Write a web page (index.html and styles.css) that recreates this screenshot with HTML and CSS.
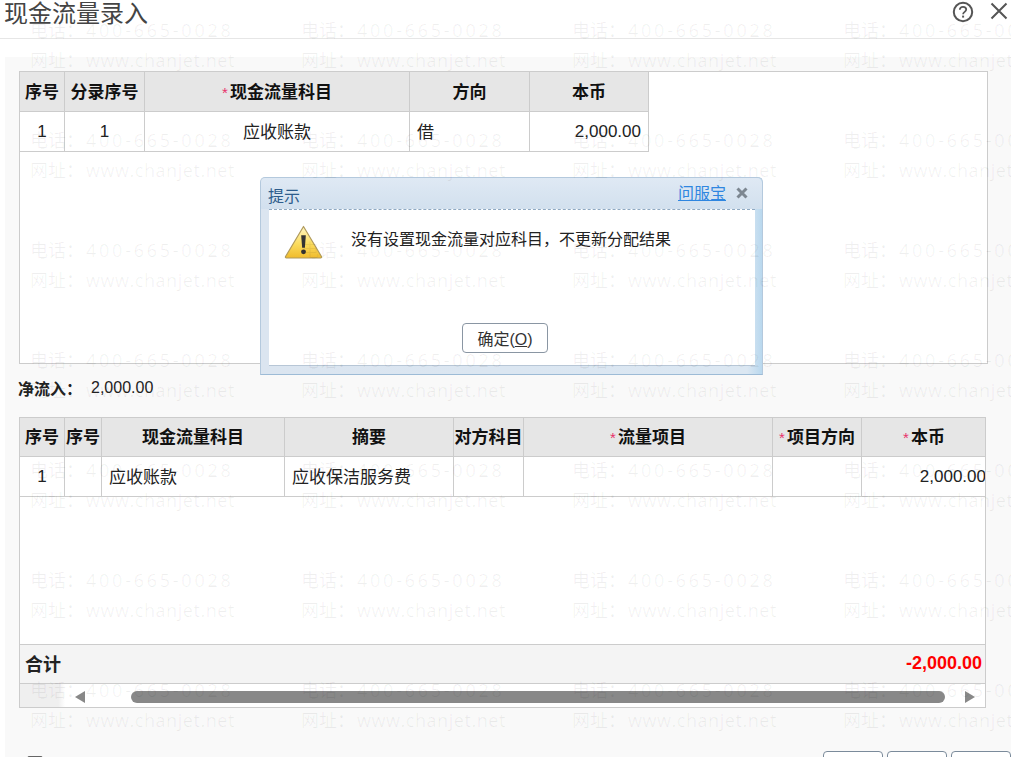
FILE: index.html
```html
<!DOCTYPE html>
<html lang="zh-CN">
<head>
    <meta charset="UTF-8">
    <title>现金流量录入</title>
    <link rel="stylesheet" href="styles.css">
</head>
<body>
    <div class="page">
        <header class="top-bar">
            <h1 class="top-title">现金流量录入</h1>
            <div class="top-icons">
                <svg class="icon-help" width="22" height="22" viewBox="0 0 22 22" fill="none" stroke="#555" stroke-width="2">
                    <circle cx="11" cy="11" r="9.2"/>
                    <path d="M7.8 8.8c0-1.9 1.4-3 3.2-3s3.2 1.1 3.2 2.8c0 2.2-3.1 2.3-3.1 4.6" stroke-width="1.8"/>
                    <path d="M11.1 14.6v2" stroke-width="2"/>
                </svg>
                <svg class="icon-close" width="20" height="20" viewBox="0 0 20 20" fill="none" stroke="#555" stroke-width="2">
                    <path d="M2.5 2.5l15 15M17.5 2.5l-15 15"/>
                </svg>
            </div>
        </header>

        <main class="content">
            <!-- 上表 -->
            <section class="panel panel-top">
                <table class="grid grid-top">
                    <tr>
                        <th class="c45">序号</th>
                        <th class="c80">分录序号</th>
                        <th class="c265"><i class="star">*</i>现金流量科目</th>
                        <th class="c120">方向</th>
                        <th class="c119">本币</th>
                    </tr>
                    <tr>
                        <td class="center digit">1</td>
                        <td class="center digit">1</td>
                        <td class="center">应收账款</td>
                        <td>借</td>
                        <td class="num digit">2,000.00</td>
                    </tr>
                </table>
            </section>

            <div class="net-row"><b>净流入：</b><span class="net-value">2,000.00</span></div>

            <!-- 下表 -->
            <section class="panel panel-bottom">
                <div class="grid-wrap">
                    <table class="grid grid-bottom">
                        <tr>
                            <th class="c45">序号</th>
                            <th class="c37">序号</th>
                            <th class="c183">现金流量科目</th>
                            <th class="c169">摘要</th>
                            <th class="c70">对方科目</th>
                            <th class="c249"><i class="star">*</i>流量项目</th>
                            <th class="c89"><i class="star">*</i>项目方向</th>
                            <th class="c124"><i class="star">*</i>本币</th>
                        </tr>
                        <tr>
                            <td class="center digit">1</td>
                            <td></td>
                            <td>应收账款</td>
                            <td>应收保洁服务费</td>
                            <td></td>
                            <td></td>
                            <td></td>
                            <td class="num num-tight digit">2,000.00</td>
                        </tr>
                    </table>
                </div>
                <div class="total-row">
                    <b>合计</b>
                    <b class="total-value">-2,000.00</b>
                </div>
                <div class="scroll-bar">
                    <div class="scroll-frozen"></div>
                    <span class="arrow arrow-left"></span>
                    <div class="scroll-thumb"></div>
                    <span class="arrow arrow-right"></span>
                </div>
            </section>

            <div class="bottom-bar">
                <span class="check"></span>
                <div class="bottom-btns">
                    <button class="btn-small"></button>
                    <button class="btn-small"></button>
                    <button class="btn-small"></button>
                </div>
            </div>
        </main>

        <!-- 提示框 -->
        <div class="dialog">
            <div class="dialog-head">
                <span class="dialog-title">提示</span>
                <a class="dialog-link" href="#">问服宝</a>
                <svg class="dialog-close" width="12" height="12" viewBox="0 0 12 12" fill="none" stroke="#7d8791" stroke-width="3">
                    <path d="M1.5 1.5l9 9M10.5 1.5l-9 9"/>
                </svg>
            </div>
            <div class="dialog-body">
                <div class="dialog-msg">
                    <svg class="icon-warn" width="39" height="34" viewBox="0 0 40 35">
                        <defs>
                            <linearGradient id="warnFill" x1="0" y1="0" x2="0" y2="1">
                                <stop offset="0" stop-color="#fff6c4"/>
                                <stop offset="0.55" stop-color="#fbdc5e"/>
                                <stop offset="1" stop-color="#f0bb2c"/>
                            </linearGradient>
                        </defs>
                        <path d="M20 1.5L38.5 32.5a1 1 0 0 1-.9 1.5H2.4a1 1 0 0 1-.9-1.5z" fill="url(#warnFill)" stroke="#b09a5c" stroke-width="1.2" stroke-linejoin="round"/>
                        <path d="M17.6 10.5h4.8l-1 13h-2.8z" fill="#333"/>
                        <circle cx="20" cy="27.6" r="2.5" fill="#333"/>
                    </svg>
                    <span class="dialog-text">没有设置现金流量对应科目，不更新分配结果</span>
                </div>
                <button class="btn-ok">确定(<u>O</u>)</button>
            </div>
        </div>

        <!-- 水印 -->
        <div class="watermark">
            <div class="wm"><p>电话：<span class="wm-tel">400-665-0028</span></p><p>网址：<span class="wm-url">www.chanjet.net</span></p></div>
            <div class="wm"><p>电话：<span class="wm-tel">400-665-0028</span></p><p>网址：<span class="wm-url">www.chanjet.net</span></p></div>
            <div class="wm"><p>电话：<span class="wm-tel">400-665-0028</span></p><p>网址：<span class="wm-url">www.chanjet.net</span></p></div>
            <div class="wm"><p>电话：<span class="wm-tel">400-665-0028</span></p><p>网址：<span class="wm-url">www.chanjet.net</span></p></div>
            <div class="wm"><p>电话：<span class="wm-tel">400-665-0028</span></p><p>网址：<span class="wm-url">www.chanjet.net</span></p></div>
            <div class="wm"><p>电话：<span class="wm-tel">400-665-0028</span></p><p>网址：<span class="wm-url">www.chanjet.net</span></p></div>
            <div class="wm"><p>电话：<span class="wm-tel">400-665-0028</span></p><p>网址：<span class="wm-url">www.chanjet.net</span></p></div>
            <div class="wm"><p>电话：<span class="wm-tel">400-665-0028</span></p><p>网址：<span class="wm-url">www.chanjet.net</span></p></div>
            <div class="wm"><p>电话：<span class="wm-tel">400-665-0028</span></p><p>网址：<span class="wm-url">www.chanjet.net</span></p></div>
            <div class="wm"><p>电话：<span class="wm-tel">400-665-0028</span></p><p>网址：<span class="wm-url">www.chanjet.net</span></p></div>
            <div class="wm"><p>电话：<span class="wm-tel">400-665-0028</span></p><p>网址：<span class="wm-url">www.chanjet.net</span></p></div>
            <div class="wm"><p>电话：<span class="wm-tel">400-665-0028</span></p><p>网址：<span class="wm-url">www.chanjet.net</span></p></div>
            <div class="wm"><p>电话：<span class="wm-tel">400-665-0028</span></p><p>网址：<span class="wm-url">www.chanjet.net</span></p></div>
            <div class="wm"><p>电话：<span class="wm-tel">400-665-0028</span></p><p>网址：<span class="wm-url">www.chanjet.net</span></p></div>
            <div class="wm"><p>电话：<span class="wm-tel">400-665-0028</span></p><p>网址：<span class="wm-url">www.chanjet.net</span></p></div>
            <div class="wm"><p>电话：<span class="wm-tel">400-665-0028</span></p><p>网址：<span class="wm-url">www.chanjet.net</span></p></div>
            <div class="wm"><p>电话：<span class="wm-tel">400-665-0028</span></p><p>网址：<span class="wm-url">www.chanjet.net</span></p></div>
            <div class="wm"><p>电话：<span class="wm-tel">400-665-0028</span></p><p>网址：<span class="wm-url">www.chanjet.net</span></p></div>
            <div class="wm"><p>电话：<span class="wm-tel">400-665-0028</span></p><p>网址：<span class="wm-url">www.chanjet.net</span></p></div>
            <div class="wm"><p>电话：<span class="wm-tel">400-665-0028</span></p><p>网址：<span class="wm-url">www.chanjet.net</span></p></div>
            <div class="wm"><p>电话：<span class="wm-tel">400-665-0028</span></p><p>网址：<span class="wm-url">www.chanjet.net</span></p></div>
            <div class="wm"><p>电话：<span class="wm-tel">400-665-0028</span></p><p>网址：<span class="wm-url">www.chanjet.net</span></p></div>
            <div class="wm"><p>电话：<span class="wm-tel">400-665-0028</span></p><p>网址：<span class="wm-url">www.chanjet.net</span></p></div>
            <div class="wm"><p>电话：<span class="wm-tel">400-665-0028</span></p><p>网址：<span class="wm-url">www.chanjet.net</span></p></div>
            <div class="wm"><p>电话：<span class="wm-tel">400-665-0028</span></p><p>网址：<span class="wm-url">www.chanjet.net</span></p></div>
            <div class="wm"><p>电话：<span class="wm-tel">400-665-0028</span></p><p>网址：<span class="wm-url">www.chanjet.net</span></p></div>
            <div class="wm"><p>电话：<span class="wm-tel">400-665-0028</span></p><p>网址：<span class="wm-url">www.chanjet.net</span></p></div>
            <div class="wm"><p>电话：<span class="wm-tel">400-665-0028</span></p><p>网址：<span class="wm-url">www.chanjet.net</span></p></div>
        </div>
    </div>
</body>
</html>
```

FILE: styles.css
```css
html, body {
    margin: 0;
    height: 100%;
    overflow: hidden;
}

body {
    font-family: "Liberation Sans", "Noto Sans CJK SC", sans-serif;
    font-size: 16px;
    color: #222;
    background-color: #fff;
}

.page {
    position: relative;
    width: 1011px;
    height: 757px;
    overflow: hidden;
}

/* 顶部标题 */
.top-bar {
    display: flex;
    justify-content: space-between;
    height: 38px;
    padding: 0 2px 0 4px;
    border-bottom: 1px solid #e6e6e6;
}

.top-title {
    margin: 0;
    font-size: 24px;
    font-weight: normal;
    line-height: 27px;
    color: #444;
}

.top-icons {
    display: flex;
    align-items: flex-start;
    gap: 15px;
    padding-top: 1px;
}

/* 主体 */
.content {
    margin: 18px 0 0 5px;
    padding: 14px 0 0 14px;
    height: 700px;
    background-color: #f9f9f9;
}

.panel {
    background-color: #fff;
    border: 1px solid #ccc;
}

.panel-top {
    width: 967px;
    height: 291px;
}

.panel-bottom {
    width: 965px;
    height: 289px;
    display: flex;
    flex-direction: column;
}

.grid {
    border-collapse: separate;
    border-spacing: 0;
    table-layout: fixed;
    font-size: 17px;
}

.grid-top { width: 629px; }
.grid-bottom { width: 966px; }

.grid th,
.grid td {
    height: 37px;
    padding: 0 0 2px;
    border-right: 1px solid #ccc;
    border-bottom: 1px solid #ccc;
    white-space: nowrap;
    overflow: hidden;
}

.grid th {
    background-color: #e6e6e6;
    color: #111;
    font-weight: bold;
    text-align: center;
}

.grid td {
    padding: 0 7px 2px;
    text-align: left;
}

.grid-bottom th {
    height: 35px;
    padding-bottom: 3px;
}

.grid-bottom th:last-child,
.grid-bottom td:last-child {
    border-right: none;
}

.grid td.center { text-align: center; }
.grid td.num { text-align: right; padding-right: 7px; }
.grid td.num-tight { padding-right: 0; }
.grid td.digit { padding-bottom: 0; }

.star {
    margin-right: 2px;
    color: #e8316a;
    font-size: 15px;
    font-style: normal;
    font-weight: normal;
}

/* 列宽 */
.c37 { width: 36px; }
.c45 { width: 44px; }
.c70 { width: 69px; }
.c80 { width: 79px; }
.c89 { width: 88px; }
.c119 { width: 118px; }
.c120 { width: 119px; }
.c124 { width: 124px; }
.c169 { width: 168px; }
.c183 { width: 182px; }
.c249 { width: 248px; }
.c265 { width: 264px; }

.net-row {
    display: flex;
    align-items: center;
    height: 48px;
    margin: 0 0 5px -1px;
}

.net-value {
    margin-left: 9px;
}

.grid-wrap {
    flex: 1;
    overflow: hidden;
}

.total-row {
    display: flex;
    justify-content: space-between;
    align-items: center;
    height: 36px;
    padding: 0 3px 2px 5px;
    background-color: #f4f4f4;
    border-top: 1px solid #ccc;
    border-bottom: 1px solid #ccc;
    font-size: 18px;
}

.total-value { color: #f00; }

.scroll-bar {
    display: flex;
    align-items: center;
    height: 23px;
}

.scroll-frozen {
    align-self: stretch;
    width: 45px;
    background: linear-gradient(to right, #efefef 85%, #fff);
}

.arrow {
    width: 0;
    height: 0;
    margin-top: 2px;
    border-top: 6px solid transparent;
    border-bottom: 6px solid transparent;
}

.arrow-left {
    margin-left: 10px;
    margin-right: 46px;
    border-right: 10px solid #888;
}

.arrow-right {
    margin-left: 20px;
    border-left: 10px solid #888;
}

.scroll-thumb {
    width: 814px;
    height: 12px;
    margin-top: 2px;
    border-radius: 6px;
    background-color: #888;
}

.bottom-bar {
    display: flex;
    justify-content: space-between;
    margin-top: 43px;
    padding-left: 8px;
}

.check {
    width: 14px;
    height: 14px;
    margin-top: 5px;
    border: 1px solid #666;
    border-radius: 2px;
}

.bottom-btns {
    display: flex;
    gap: 4px;
}

.btn-small {
    width: 60px;
    height: 30px;
    padding: 0;
    background-color: #fff;
    border: 1px solid #7b8b9b;
    border-radius: 4px;
}

/* 提示框 */
.dialog {
    position: absolute;
    top: 177px;
    left: 260px;
    width: 503px;
    height: 198px;
    display: flex;
    flex-direction: column;
    box-sizing: border-box;
    padding: 0 7px 8px 8px;
    background: linear-gradient(to right, #dbe5f0, #dbe7f2 97%, #b9d8ee);
    border: 1px solid #b4c9dd;
    border-bottom-color: #9dbbd6;
    border-radius: 5px 5px 0 0;
}

.dialog-head {
    display: flex;
    align-items: center;
    height: 31px;
    margin: 0 -7px 0 -8px;
    padding: 3px 14px 0 7px;
    box-sizing: border-box;
    background: linear-gradient(to bottom, #dfe9f4, #d2e0ee);
    border-radius: 5px 5px 0 0;
}

.dialog-title {
    flex: 1;
    color: #2e5d8c;
}

.dialog-link {
    margin: -6px 10px 0 0;
    color: #2f86e0;
    text-decoration: underline;
}

.dialog-close {
    margin-top: -4px;
}

.dialog-body {
    flex: 1;
    display: flex;
    flex-direction: column;
    background-color: #fff;
    border-top: 1px dashed #8fa9c2;
    border-bottom: 1px solid #b7c6d6;
}

.dialog-msg {
    display: flex;
    align-items: flex-start;
    gap: 28px;
    padding: 15px 16px 0 15px;
}

.icon-warn {
    flex: none;
}

.dialog-text {
    line-height: 30px;
}

.btn-ok {
    width: 86px;
    height: 30px;
    margin: auto 0 12px 193px;
    padding: 0;
    font-family: inherit;
    font-size: 16px;
    color: #333;
    background-color: #fff;
    border: 1px solid #8a96a3;
    border-radius: 4px;
}

/* 水印盖在最上层 */
.watermark {
    position: absolute;
    top: 15px;
    left: 30px;
    display: grid;
    grid-template-columns: repeat(4, 271px);
    grid-auto-rows: 110px;
    pointer-events: none;
}

.wm {
    font-family: "Open Sans", "Noto Sans CJK SC", sans-serif;
    font-size: 18px;
    line-height: 30px;
    white-space: nowrap;
    color: rgba(0, 0, 0, 0.06);
}

.wm p {
    margin: 0;
}

.wm-tel {
    margin-left: 2px;
    letter-spacing: 2.75px;
}

.wm-url {
    margin-left: 2px;
    letter-spacing: 0.55px;
}
```
